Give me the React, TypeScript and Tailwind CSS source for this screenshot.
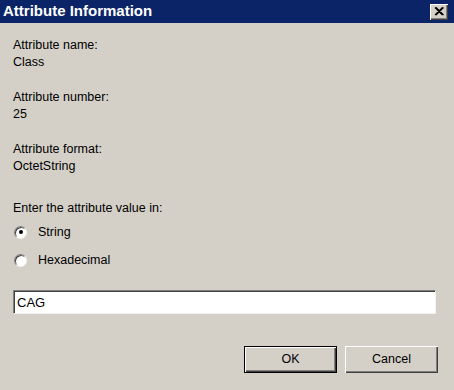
import React, { useState } from 'react';

const Field: React.FC<{ label: string; value: string }> = ({ label, value }) => (
  <div className="flex flex-col leading-[17px]">
    <span>{label}</span>
    <span>{value}</span>
  </div>
);

const Radio: React.FC<{ label: string; checked: boolean; onClick: () => void }> = ({
  label,
  checked,
  onClick,
}) => (
  <div className="flex h-[20px] items-center gap-[11px] pl-[1px]" onClick={onClick}>
    <span className="relative h-[13px] w-[13px] rounded-full border border-t-[#808080] border-l-[#808080] border-r-[#f4f2ee] border-b-[#f4f2ee] bg-white shadow-[inset_1px_1px_0_#404040]">
      {checked && (
        <span className="absolute left-[3.5px] top-[3.5px] h-[4px] w-[4px] rounded-full bg-black" />
      )}
    </span>
    <span>{label}</span>
  </div>
);

const Button: React.FC<{ label: string; primary?: boolean }> = ({ label, primary }) => (
  <button
    className={
      'flex h-[27px] w-[93px] items-center justify-center bg-[#d4d0c8] ' +
      (primary
        ? 'border border-black shadow-[inset_1px_1px_0_#ffffff,inset_-1px_-1px_0_#404040,inset_-2px_-2px_0_#808080]'
        : 'shadow-[inset_1px_1px_0_#ffffff,inset_-1px_-1px_0_#404040,inset_-2px_-2px_0_#808080]')
    }
  >
    {label}
  </button>
);

export default function App() {
  const [mode, setMode] = useState<'string' | 'hex'>('string');
  const [value, setValue] = useState('CAG');

  return (
    <div
      className="flex h-[390px] w-[454px] flex-col bg-[#d4d0c8] text-[12.5px] text-black"
      style={{ fontFamily: '"Liberation Sans", Arial, sans-serif' }}
    >
      <div className="flex h-[23px] items-center justify-between bg-[#0b2468] pl-[3px] pr-[6px]">
        <span className="text-[15px] font-bold text-white">Attribute Information</span>
        <span className="flex h-[16px] w-[18px] items-center justify-center bg-[#d4d0c8] shadow-[inset_1px_1px_0_#ffffff,inset_-1px_-1px_0_#404040,inset_-2px_-2px_0_#808080]">
          <svg width="10" height="9" viewBox="0 0 10 9">
            <path d="M1 0.5 L8.5 8 M8.5 0.5 L1 8 M2 0.5 L9.5 8 M9.5 0.5 L2 8" stroke="#000" strokeWidth="1.2" />
          </svg>
        </span>
      </div>

      <div className="flex flex-1 flex-col px-[13px] pt-[14px]">
        <div className="flex flex-col gap-[18px]">
          <Field label="Attribute name:" value="Class" />
          <Field label="Attribute number:" value="25" />
          <Field label="Attribute format:" value="OctetString" />
        </div>

        <div className="mt-[25px] leading-[17px]">Enter the attribute value in:</div>
        <div className="mt-[5px] flex flex-col gap-[8px]">
          <Radio label="String" checked={mode === 'string'} onClick={() => setMode('string')} />
          <Radio label="Hexadecimal" checked={mode === 'hex'} onClick={() => setMode('hex')} />
        </div>

        <input
          className="mt-[20px] h-[24px] w-[423px] border border-t-[#808080] border-l-[#808080] border-r-[#f4f2ee] border-b-[#f4f2ee] bg-white px-[3px] text-[13px] outline-none shadow-[inset_1px_1px_0_#404040]"
          value={value}
          onChange={(e) => setValue(e.target.value)}
        />

        <div className="mt-[32px] flex justify-end gap-[8px] pr-[3px]">
          <Button label="OK" primary />
          <Button label="Cancel" />
        </div>
      </div>
    </div>
  );
}
